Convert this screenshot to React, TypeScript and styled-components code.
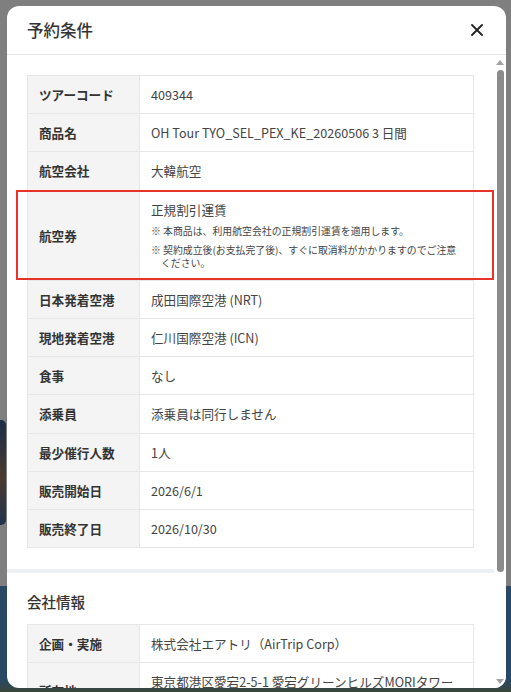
import React from "react";
import styled, { createGlobalStyle } from "styled-components";

interface Row {
  label: string;
  value: string;
  notes?: string[];
  highlight?: boolean;
}

const GlobalStyle = createGlobalStyle`
  html, body {
    margin: 0;
    padding: 0;
  }
  body {
    font-family: "Noto Sans CJK JP", "Noto Sans", sans-serif;
    color: #333333;
  }
`;

const Screen = styled.div`
  position: relative;
  width: 511px;
  height: 692px;
  overflow: hidden;
  display: flex;
  flex-direction: column;
`;

// the page that sits under the dimmed overlay
const PageTop = styled.div`
  flex: 1;
  background: #7f7f7f;
  padding-top: 420px;
`;

const PageThumb = styled.div`
  width: 6px;
  height: 105px;
  border-radius: 0 5px 5px 0;
  background: linear-gradient(180deg, #1c2d48 0%, #4a3a30 55%, #23324c 100%);
`;

const PageFooter = styled.div`
  height: 106px;
  background: linear-gradient(180deg, #284866 0%, #284866 88%, #3b4638 100%);
`;

const Modal = styled.div`
  position: absolute;
  top: 6px;
  left: 7px;
  width: 499px;
  height: 682px;
  background: #ffffff;
  border-radius: 12px;
  overflow: hidden;
  display: flex;
  flex-direction: column;
`;

const Header = styled.div`
  box-sizing: border-box;
  height: 49px;
  flex-shrink: 0;
  display: flex;
  align-items: center;
  justify-content: space-between;
  padding: 0 23px 0 20px;
  border-bottom: 1px solid #e6e6e6;
`;

const Title = styled.h2`
  margin: 0;
  font-size: 16.5px;
  font-weight: 500;
  color: #333333;
`;

const CloseButton = styled.button`
  border: none;
  background: none;
  padding: 0;
  width: 12px;
  height: 12px;
  display: flex;
  cursor: pointer;
`;

const BodyWrap = styled.div`
  position: relative;
  flex: 1;
  min-height: 0;
  display: flex;
`;

const Body = styled.div`
  flex: 1;
  overflow-y: auto;
  scrollbar-width: none;

  &::-webkit-scrollbar {
    display: none;
  }
`;

// drawn scrollbar, the headless browser hides the native one
const ScrollTrack = styled.div`
  position: absolute;
  top: 0;
  right: 0;
  bottom: 0;
  width: 12px;
  background: #ffffff;
  display: flex;
  flex-direction: column;
  align-items: center;
`;

const ArrowButton = styled.div<{ $down?: boolean }>`
  height: 15px;
  width: 100%;
  flex-shrink: 0;
  display: flex;
  justify-content: center;
  align-items: ${(p) => (p.$down ? "flex-end" : "flex-start")};
  padding: ${(p) => (p.$down ? "0 0 4px" : "5px 0 0")};
  box-sizing: border-box;
  margin-top: ${(p) => (p.$down ? "auto" : "0")};

  &::before {
    content: "";
    width: 0;
    height: 0;
    border-left: 4px solid transparent;
    border-right: 4px solid transparent;
    ${(p) =>
      p.$down ? "border-top: 5px solid #a3a3a3;" : "border-bottom: 5px solid #a3a3a3;"}
  }
`;

const Thumb = styled.div`
  width: 7px;
  height: 502px;
  margin-left: 1px;
  border-radius: 4px;
  background: #8b8b8b;
  flex-shrink: 0;
`;

const Section = styled.section<{ $divider?: boolean }>`
  padding: 20px 32px 21px 20px;
  border-bottom: ${(p) => (p.$divider ? "4px solid #edf0f3" : "none")};
`;

const SectionTitle = styled.h3`
  margin: -2px 0 11px;
  font-size: 14.5px;
  line-height: 22px;
  font-weight: 500;
  color: #333333;
`;

const Table = styled.table`
  width: 100%;
  border-collapse: collapse;
  table-layout: fixed;
`;

const Label = styled.th<{ $highlight?: boolean }>`
  position: relative;
  width: 112px;
  box-sizing: border-box;
  padding: 10px 11px;
  background: #f4f4f4;
  border: 1px solid #e6e6e6;
  font-size: 12.6px;
  line-height: 17.2px;
  font-weight: 700;
  color: #333333;
  text-align: left;
  vertical-align: middle;

  &::after {
    content: "";
    display: ${(p) => (p.$highlight ? "block" : "none")};
    position: absolute;
    top: -1px;
    left: -12px;
    width: 478px;
    height: 90px;
    box-sizing: border-box;
    border: 2px solid #e8332d;
    pointer-events: none;
  }
`;

const Value = styled.td`
  padding: 10px 11px;
  border: 1px solid #e6e6e6;
  font-size: 12.6px;
  line-height: 17.2px;
  color: #444444;
  vertical-align: middle;
`;

const Note = styled.p`
  margin: 6px 0 0;
  padding-left: 1em;
  text-indent: -1em;
  font-size: 9.9px;
  line-height: 13px;
  color: #444444;

  &:first-of-type {
    margin-top: 7px;
  }
`;

const tourRows: Row[] = [
  { label: "ツアーコード", value: "409344" },
  { label: "商品名", value: "OH Tour TYO_SEL_PEX_KE_20260506 3 日間" },
  { label: "航空会社", value: "大韓航空" },
  {
    label: "航空券",
    value: "正規割引運賃",
    notes: [
      "※ 本商品は、利用航空会社の正規割引運賃を適用します。",
      "※ 契約成立後(お支払完了後)、すぐに取消料がかかりますのでご注意ください。",
    ],
    highlight: true,
  },
  { label: "日本発着空港", value: "成田国際空港 (NRT)" },
  { label: "現地発着空港", value: "仁川国際空港 (ICN)" },
  { label: "食事", value: "なし" },
  { label: "添乗員", value: "添乗員は同行しません" },
  { label: "最少催行人数", value: "1人" },
  { label: "販売開始日", value: "2026/6/1" },
  { label: "販売終了日", value: "2026/10/30" },
];

const companyRows: Row[] = [
  { label: "企画・実施", value: "株式会社エアトリ（AirTrip Corp）" },
  { label: "所在地", value: "東京都港区愛宕2-5-1 愛宕グリーンヒルズMORIタワー 9階" },
  { label: "登録番号", value: "観光庁長官登録旅行業第1850号" },
  { label: "電話番号", value: "03-6743-8222" },
];

const InfoTable: React.FC<{ rows: Row[] }> = ({ rows }) => (
  <Table>
    <tbody>
      {rows.map((row) => (
        <tr key={row.label}>
          <Label $highlight={row.highlight}>{row.label}</Label>
          <Value>
            {row.value}
            {row.notes?.map((note) => (
              <Note key={note}>{note}</Note>
            ))}
          </Value>
        </tr>
      ))}
    </tbody>
  </Table>
);

const App: React.FC = () => {
  return (
    <Screen>
      <GlobalStyle />
      <PageTop>
        <PageThumb />
      </PageTop>
      <PageFooter />
      <Modal>
        <Header>
          <Title>予約条件</Title>
          <CloseButton aria-label="閉じる">
            <svg width="12" height="12" viewBox="0 0 12 12">
              <path d="M1 1 L11 11 M11 1 L1 11" stroke="#222" strokeWidth="1.8" strokeLinecap="round" />
            </svg>
          </CloseButton>
        </Header>
        <BodyWrap>
          <Body>
            <Section $divider>
              <InfoTable rows={tourRows} />
            </Section>
            <Section>
              <SectionTitle>会社情報</SectionTitle>
              <InfoTable rows={companyRows} />
            </Section>
          </Body>
          <ScrollTrack>
            <ArrowButton />
            <Thumb />
            <ArrowButton $down />
          </ScrollTrack>
        </BodyWrap>
      </Modal>
    </Screen>
  );
};

export default App;
